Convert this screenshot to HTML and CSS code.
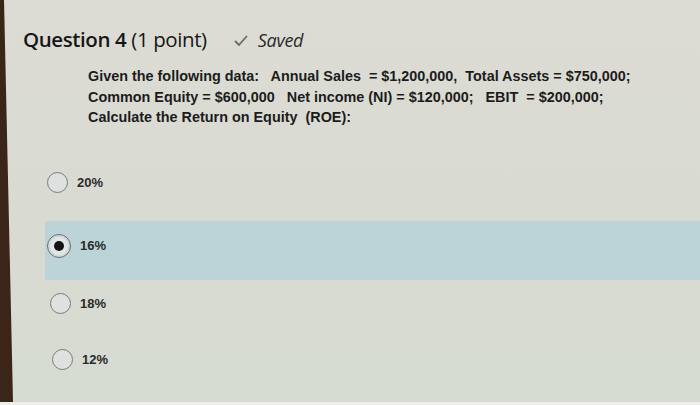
FILE: index.html
```html
<!DOCTYPE html>
<html>
<head>
<meta charset="utf-8">
<link rel="stylesheet" href="styles.css">
</head>
<body>
<div class="screen">
  <div class="bezel"></div>
  <main class="page">
    <header class="qhead">
      <h1 class="qtitle"><span class="qnum">Question 4</span> <span class="pts">(1 point)</span></h1>
      <span class="saved">
        <svg class="check" viewBox="0 0 14 12" width="14" height="12"><path d="M1.5 6.5 L5 10 L12.5 1.5" fill="none" stroke="#6a6a6a" stroke-width="1.8" stroke-linecap="round" stroke-linejoin="round"/></svg>
        <span class="saved-text">Saved</span>
      </span>
    </header>
    <div class="prompt">
      <p class="line">Given the following data:   Annual Sales  = $1,200,000,  Total Assets = $750,000;</p>
      <p class="line">Common Equity = $600,000   Net income (NI) = $120,000;   EBIT  = $200,000;</p>
      <p class="line">Calculate the Return on Equity  (ROE):</p>
    </div>
    <ul class="options">
      <li class="option o1"><span class="radio"></span><span class="label">20%</span></li>
      <li class="option o2 selected"><span class="radio"><span class="dot"></span></span><span class="label">16%</span></li>
      <li class="option o3"><span class="radio"></span><span class="label">18%</span></li>
      <li class="option o4"><span class="radio"></span><span class="label">12%</span></li>
    </ul>
  </main>
</div>
</body>
</html>
```

FILE: styles.css
```css
html, body {
  margin: 0;
  padding: 0;
}
body {
  width: 700px;
  height: 405px;
  overflow: hidden;
  background: #dadad2;
}
.screen {
  display: flex;
  width: 700px;
  height: 405px;
  background: linear-gradient(180deg, #dcdcd5 0%, #d9dad2 55%, #d6dcd2 100%);
  border-bottom: 3px solid #eeeeea;
  box-sizing: border-box;
}
.bezel {
  flex: 0 0 13px;
  background: #3b2418;
  clip-path: polygon(0 0, 4px 0, 13px 100%, 0 100%);
}
.page {
  flex: 1;
  display: flex;
  flex-direction: column;
}
.qhead {
  display: flex;
  align-items: baseline;
  margin: 23px 0 0 10px;
  height: 32px;
}
.qtitle {
  margin: 0;
  font-family: "Open Sans", sans-serif;
  font-size: 20.5px;
  line-height: 32px;
  font-weight: 400;
  color: #161616;
  letter-spacing: -0.4px;
}
.qnum {
  font-weight: 600;
}
.saved {
  margin-left: 27px;
  display: inline-flex;
  align-items: baseline;
  font-family: "Open Sans", sans-serif;
  font-style: italic;
  font-size: 18px;
  color: #2a2a2a;
  letter-spacing: -0.3px;
}
.check {
  margin-right: 10px;
}
.prompt {
  margin: 11px 0 0 75px;
}
.line {
  margin: 0;
  font-family: "Liberation Sans", Arial, sans-serif;
  font-weight: 700;
  font-size: 14.4px;
  line-height: 20.5px;
  color: #1c1c1c;
  white-space: pre;
}
.options {
  list-style: none;
  margin: 31px 0 0 32px;
  padding: 0;
  display: flex;
  flex-direction: column;
}
.option {
  display: flex;
  align-items: center;
  height: 48px;
  padding-bottom: 8px;
  padding-left: 2px;
}
.o1 {
  margin-bottom: 6px;
}
.o3 { padding-left: 5px; }
.o4 { padding-left: 7px; }
.selected {
  background: #bcd4d7;
  height: 50px;
  padding-top: 0;
  padding-bottom: 9px;
}
.radio {
  width: 21px;
  height: 21px;
  box-sizing: border-box;
  border: 1.5px solid #7a7a78;
  border-radius: 50%;
  background: #dde2e0;
  display: flex;
  align-items: center;
  justify-content: center;
  flex: 0 0 auto;
}
.selected .radio {
  width: 24px;
  height: 24px;
  border: 1.5px solid #6a6a6a;
  background: #e2e6e5;
  box-shadow: inset 0 0 0 2px #cfd9da;
}
.dot {
  width: 10px;
  height: 10px;
  border-radius: 50%;
  background: #141414;
}
.label {
  margin-left: 9px;
  font-family: "Liberation Sans", Arial, sans-serif;
  font-weight: 700;
  font-size: 13px;
  color: #2a2a2a;
}
```
